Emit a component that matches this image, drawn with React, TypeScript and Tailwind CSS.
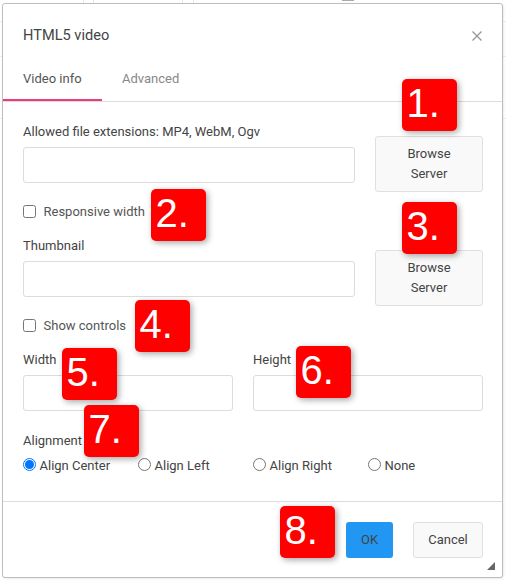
import React from "react";

function Badge({ n, className }: { n: string; className: string }) {
  return (
    <div className={`absolute w-[55px] h-[52px] rounded-[5px] bg-[#ff0000] text-white text-[40px] leading-[48px] pl-[4.5px] shadow-[2px_2px_6px_rgba(0,0,0,0.35)] font-['Liberation_Sans',sans-serif] ${className}`}>
      {n}
    </div>
  );
}

function Input() {
  return <div className="h-9 rounded-[3px] border border-[#dcdcdc] bg-white" />;
}

function Browse() {
  return (
    <div className="w-[108px] h-14 shrink-0 rounded-[3px] border border-[#e0e0e0] bg-[#f9f9f9] flex items-center justify-center text-center leading-5 text-[13px] text-[#444]">
      Browse<br />Server
    </div>
  );
}

function Label({ children }: { children: React.ReactNode }) {
  return <div className="text-[13px] text-[#444] leading-4 pt-px mb-[7px]">{children}</div>;
}

function Check({ label, className }: { label: string; className: string }) {
  return (
    <div className={`flex items-center h-4 ${className}`}>
      <span className="w-[13px] h-[13px] rounded-[2.5px] border border-[#767676] bg-white mr-[7.5px]" />
      <span className="text-[13px] text-[#555] mt-[2px]">{label}</span>
    </div>
  );
}

function Radio({ label, checked }: { label: string; checked?: boolean }) {
  return (
    <div className="flex items-center h-4">
      <span className={`w-[13px] h-[13px] rounded-full border bg-white flex items-center justify-center -mt-0.5 mr-[3.5px] ${checked ? "border-[#0075ff]" : "border-[#767676]"}`}>
        {checked && <span className="w-[9px] h-[9px] rounded-full bg-[#0075ff]" />}
      </span>
      <span className="text-[13px] text-[#444] mt-[2px]">{label}</span>
    </div>
  );
}

export default function App() {
  return (
    <div className="relative w-[506px] h-[581px] bg-white overflow-hidden pt-[3px] pl-[2px] font-['Roboto',sans-serif]">
      <div className="absolute left-[83px] top-0 w-px h-[3px] bg-[#e8e8e8]" />
      <div className="absolute left-[93px] top-0 w-px h-[3px] bg-[#e8e8e8]" />
      <div className="absolute left-[182px] top-0 w-px h-[3px] bg-[#e8e8e8]" />
      <div className="absolute left-[193px] top-0 w-px h-[3px] bg-[#e8e8e8]" />
      <div className="absolute left-[342px] top-0 w-[12px] h-px bg-[#aaaaaa]" />
      <div className="absolute left-0 top-[21px] w-[2px] h-px bg-[#eeeeee]" />
      <div className="absolute left-0 top-[56px] w-[2px] h-px bg-[#eeeeee]" />
      <div className="absolute left-0 top-[118px] w-[2px] h-px bg-[#eeeeee]" />
      <div className="absolute right-0 top-[21px] w-[3px] h-px bg-[#eeeeee]" />
      <div className="absolute right-0 top-[56px] w-[3px] h-px bg-[#eeeeee]" />
      <div className="absolute right-0 top-[118px] w-[3px] h-px bg-[#eeeeee]" />
      <div className="relative w-[501px] h-[575px] rounded-[3px] border border-[#bdbdbd] bg-white flex flex-col shadow-[1px_1px_2px_rgba(0,0,0,0.08)]">
        <div className="flex items-center justify-between h-[62px] pl-5 pr-5 pt-px">
          <span className="text-[14.6px] text-[#444]">HTML5 video</span>
          <svg width="10" height="10" viewBox="0 0 10 10" className="stroke-[#999]" strokeWidth="1.4" fill="none">
            <path d="M0.5 0.5L9.5 9.5M9.5 0.5L0.5 9.5" />
          </svg>
        </div>
        <div className="flex h-[36px] border-b border-[#dcdcdc] text-[13px]">
          <div className="w-[99px] h-[35px] border-b-2 border-[#ed3c76] pl-5 pt-[3px] text-[#555] leading-[20px]">Video info</div>
          <div className="pl-5 pt-[3px] text-[#888] leading-[20px]">Advanced</div>
        </div>
        <div className="pl-5 pr-[19px] flex-1">
          <div className="flex gap-5 mt-[34px]">
            <div className="flex-1">
              <div className="text-[13px] text-[#444] leading-4 -mt-3 mb-[7px]">Allowed file extensions: MP4, WebM, Ogv</div>
              <Input />
            </div>
            <Browse />
          </div>
          <Check label="Responsive width" className="mt-[11px]" />
          <div className="flex gap-5 mt-[18px]">
            <div className="flex-1">
              <Label>Thumbnail</Label>
              <Input />
            </div>
            <div className="pt-[13px]"><Browse /></div>
          </div>
          <Check label="Show controls" className="mt-[11px]" />
          <div className="flex gap-5 mt-[18px]">
            <div className="w-[210px]">
              <Label>Width</Label>
              <Input />
            </div>
            <div className="flex-1">
              <Label>Height</Label>
              <Input />
            </div>
          </div>
          <div className="text-[13px] text-[#444] leading-4 mt-[22px] mb-2">Alignment</div>
          <div className="grid grid-cols-4">
            <Radio label="Align Center" checked />
            <Radio label="Align Left" />
            <Radio label="Align Right" />
            <Radio label="None" />
          </div>
        </div>
        <div className="h-[76px] border-t border-[#dcdcdc] flex justify-end items-start gap-5 pt-5 pr-[19px]">
          <div className="w-[47px] h-9 rounded-[3px] bg-[#2196f3] text-[13px] text-[#444] flex items-center justify-center">OK</div>
          <div className="w-[70px] h-9 rounded-[3px] border border-[#e0e0e0] bg-[#f9f9f9] text-[13px] text-[#444] flex items-center justify-center">Cancel</div>
        </div>
        <svg width="8" height="8" viewBox="0 0 8 8" className="absolute left-[484px] top-[558px] fill-[#666]">
          <path d="M8 0V8H0Z" />
        </svg>
        <Badge n="1." className="left-[399px] top-[75px]" />
        <Badge n="2." className="left-[148px] top-[185px]" />
        <Badge n="3." className="left-[399px] top-[198px]" />
        <Badge n="4." className="left-[132px] top-[296px]" />
        <Badge n="5." className="left-[59px] top-[344px]" />
        <Badge n="6." className="left-[293px] top-[342px]" />
        <Badge n="7." className="left-[81px] top-[401px]" />
        <Badge n="8." className="left-[277px] top-[502px]" />
      </div>
    </div>
  );
}
